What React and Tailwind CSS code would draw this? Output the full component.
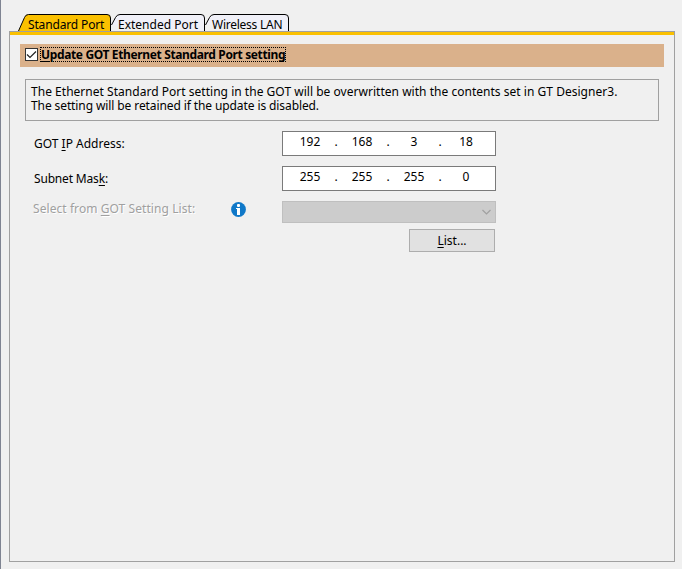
import React, { useState } from "react";
import clsx from "clsx";

const TABS = [
  { label: "Standard Port", width: "w-[93px]", pad: "pl-[10px]", tracking: "tracking-[-0.15px]", shape: "M0.5 17 L6.5 3.5 Q7.5 0.5 10.5 0.5 H89 Q92.5 0.5 92.5 4 V17" },
  { label: "Extended Port", width: "w-[94px]", pad: "pl-[7px]", tracking: "tracking-[0px]", shape: "M0.5 11 L4.5 3.5 Q6 0.5 9 0.5 H90 Q93.5 0.5 93.5 4 V17" },
  { label: "Wireless LAN", width: "w-[84px]", pad: "pl-[7px]", tracking: "tracking-[-0.25px]", shape: "M0.5 11 L4.5 3.5 Q6 0.5 9 0.5 H80 Q83.5 0.5 83.5 4 V17" },
];

const Key = ({ children }) => (
  <span className="underline decoration-1 underline-offset-[2px] [text-decoration-skip-ink:none]">{children}</span>
);

const Tab = ({ tab, active, onSelect }) => (
  <button
    type="button"
    onClick={onSelect}
    className={clsx("relative h-[17px] text-left whitespace-nowrap leading-[21px]", tab.width, tab.pad, tab.tracking)}
  >
    <svg className="absolute inset-0 h-full w-full overflow-visible" fill="none">
      <path d={tab.shape} fill={active ? "#fac000" : "#f0f0f8"} stroke="#000000" />
    </svg>
    <span className="relative">{tab.label}</span>
  </button>
);

const AddressField = ({ octets }) => (
  <div className="flex h-[25px] w-[214px] border border-[#7a7a7a] bg-white pl-[3px] leading-[20px]">
    {octets.map((octet, i) => (
      <React.Fragment key={i}>
        {i > 0 && <span className="w-[4px] text-center">.</span>}
        <span className="w-[48px] text-center">{octet}</span>
      </React.Fragment>
    ))}
  </div>
);

const InfoIcon = () => (
  <svg width="15" height="15" viewBox="0 0 15 15">
    <circle cx="7.5" cy="7.5" r="7.4" fill="#0f78c8" />
    <rect x="6" y="2" width="3" height="3" rx="1" fill="#fff" />
    <path d="M5 6h4v7H6V7H5z" fill="#fff" />
  </svg>
);

const App = () => {
  const [activeTab, setActiveTab] = useState(0);
  const [update, setUpdate] = useState(true);

  return (
    <div className="flex h-[569px] w-[682px] flex-col overflow-hidden border-l border-[#7f8492] bg-[#f0f0f0] pl-[8px] pt-[14px] font-['Noto_Sans',sans-serif] text-[12px] text-black">
      <div className="flex h-[17px] pl-[9px]">
        {TABS.map((tab, i) => (
          <Tab key={tab.label} tab={tab} active={i === activeTab} onSelect={() => setActiveTab(i)} />
        ))}
      </div>

      <div className="relative h-[531px] w-[666px] border border-[#a0a0a0]">
        <div className="h-[3px] bg-[#fac000]" />

        <div className="ml-[10px] mt-[9px] flex h-[23px] w-[644px] items-start bg-[#dab18b] pl-[5px] pt-[3px]">
          <button
            type="button"
            onClick={() => setUpdate(!update)}
            className="mt-px h-[13px] w-[13px] shrink-0 border border-[#333333] bg-white"
          >
            {update && (
              <svg className="block" width="11" height="11" fill="none" stroke="#222222" strokeWidth="1.2">
                <path d="M1 5.5 L4 8.5 L10 2.5" />
              </svg>
            )}
          </button>
          <span className="ml-[2px] h-[15px] w-[246px] whitespace-nowrap border border-dotted border-black font-bold leading-[14px] tracking-[-0.36px]">
            <Key>U</Key>pdate GOT Ethernet Standard Port setting
          </span>
        </div>

        <p className="ml-[15px] mt-[12px] h-[42px] w-[634px] whitespace-nowrap border border-[#a0a0a0] pl-[5px] pt-[5px] leading-[14px]">
          <span className="tracking-[0.025px]">
            The Ethernet Standard Port setting in the GOT will be overwritten with the contents set in GT Designer3.
          </span>
          <br />
          <span className="tracking-[-0.1px]">The setting will be retained if the update is disabled.</span>
        </p>

        <div className="ml-[24px] mt-[10px] flex h-[25px]">
          <span className="w-[248px] leading-[25px]">GOT <Key>I</Key>P Address:</span>
          <AddressField octets={[192, 168, 3, 18]} />
        </div>
        <div className="ml-[24px] mt-[10px] flex h-[25px]">
          <span className="w-[248px] leading-[25px] tracking-[-0.17px]">Subnet Mas<Key>k</Key>:</span>
          <AddressField octets={[255, 255, 255, 0]} />
        </div>
        <div className="ml-[23px] mt-[10px] flex h-[22px]">
          <span className="w-[198px] leading-[16px] tracking-[0.07px] text-[#a0a0a0] [text-shadow:1px_1px_0_#ffffff]">
            Select from <Key>G</Key>OT Setting List:
          </span>
          <span className="w-[51px] pt-[1px]"><InfoIcon /></span>
          <div className="flex h-[22px] w-[214px] items-center justify-end border border-[#bfbfbf] bg-[#cccccc] pr-[4px]">
            <svg width="9" height="6" fill="none" stroke="#a0a0a0" strokeWidth="1.2">
              <path d="M0.5 1 L4.5 5 L8.5 1" />
            </svg>
          </div>
        </div>
        <button
          type="button"
          className="ml-[399px] mt-[6px] block h-[23px] w-[86px] border border-[#adadad] bg-[#e1e1e1] text-center leading-[21px]"
        >
          <Key>L</Key>ist...
        </button>
      </div>
    </div>
  );
};

export default App;
